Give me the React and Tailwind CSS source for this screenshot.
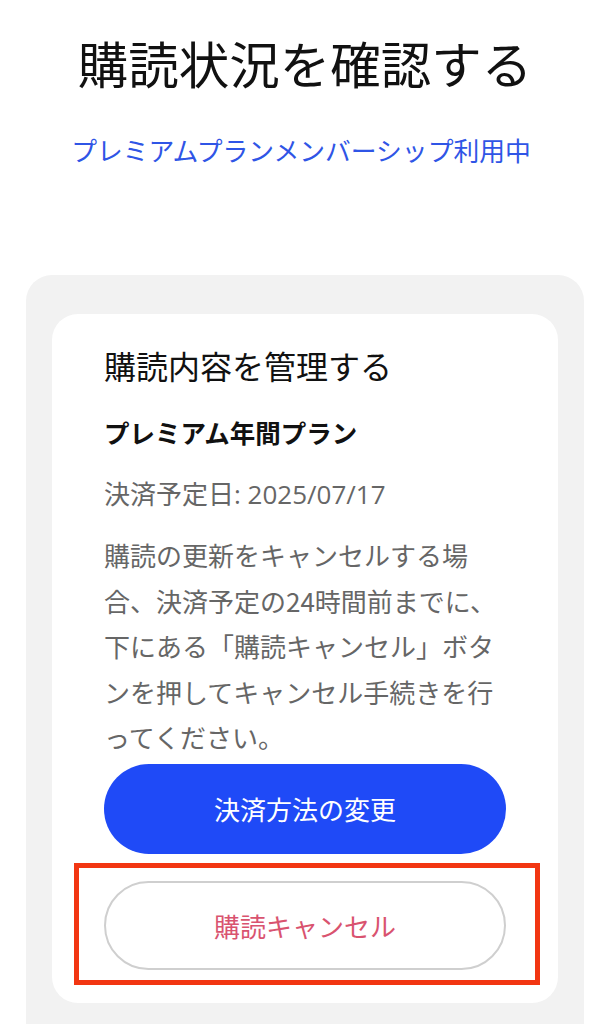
export default function App() {
  return (
    <div
      className="w-[610px] h-[1024px] overflow-hidden bg-white flex flex-col items-center"
      style={{ fontFamily: '"Noto Sans CJK JP", "Noto Sans", sans-serif' }}
    >
      <h1 className="mt-[32px] text-[50.5px] leading-[60px] text-[#111111] font-normal">
        購読状況を確認する
      </h1>
      <p className="mt-[40px] mr-[8px] text-[25.8px] leading-[36px] text-[#2f55e6]">
        プレミアムプランメンバーシップ利用中
      </p>
      <div className="mt-[107px] w-[558px] flex-1 rounded-t-[26px] bg-[#f2f2f2] px-[26px] pt-[39px]">
        <div className="rounded-[26px] bg-white px-[52px] pt-[29px] pb-[33px]">
          <h2 className="text-[32px] leading-[44px] text-[#111111] font-normal">
            購読内容を管理する
          </h2>
          <p className="mt-[27px] text-[25.5px] leading-[36px] font-bold text-[#111111]">
            プレミアム年間プラン
          </p>
          <p
            className="mt-[26px] text-[26px] leading-[36px] text-[#666666]"
            style={{ fontFamily: '"Open Sans", "Noto Sans CJK JP", sans-serif' }}
          >
            決済予定日: 2025/07/17
          </p>
          <p className="mt-[20px] text-[26px] leading-[45.5px] text-[#666666]">
            購読の更新をキャンセルする場
            <br />
            合、決済予定の24時間前までに、
            <br />
            下にある「購読キャンセル」ボタ
            <br />
            ンを押してキャンセル手続きを行
            <br />
            ってください。
          </p>
          <button className="mt-[4px] w-full h-[90px] rounded-full bg-[#1f4af7] text-white text-[26px] flex items-center justify-center">
            決済方法の変更
          </button>
          <div className="relative mt-[27px]">
            <button className="w-full h-[89px] rounded-full border-[2.5px] border-[#cfcfcf] bg-white text-[#d9536f] text-[26px] flex items-center justify-center">
              購読キャンセル
            </button>
            <div className="pointer-events-none absolute top-[-18px] bottom-[-15px] left-[-30px] right-[-34px] border-[5px] border-[#f23612]" />
          </div>
        </div>
      </div>
    </div>
  );
}
